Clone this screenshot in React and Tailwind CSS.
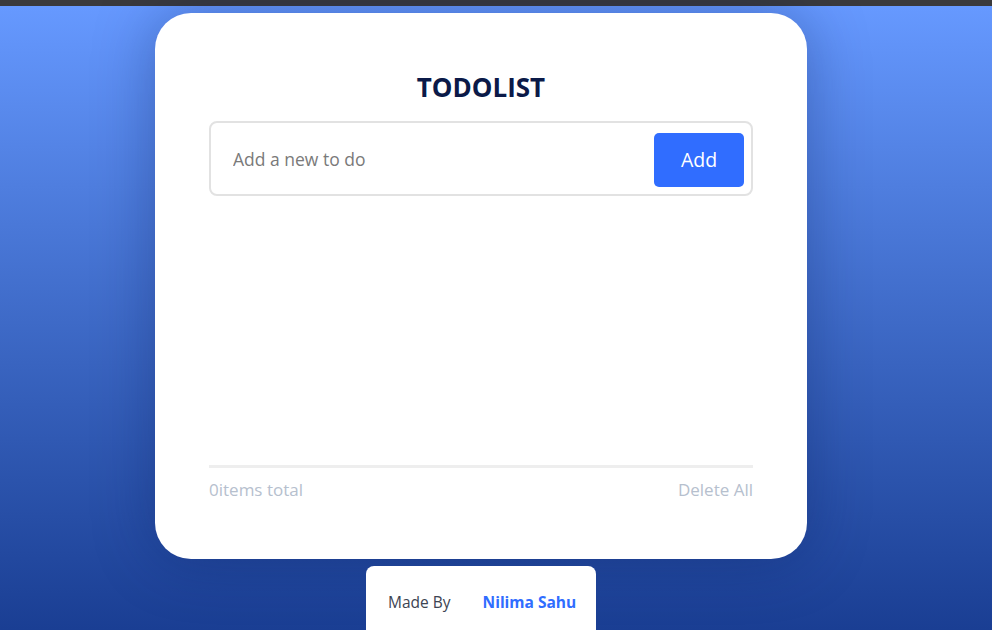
import React, { useState } from "react";

const App = () => {
  const [todo, setTodo] = useState("");
  const items = [];

  return (
    <div className="h-[630px] overflow-hidden font-['Open_Sans',sans-serif]">
      <div className="h-[6px] bg-[#3a3a3c]" />
      <div className="h-[624px] bg-gradient-to-b from-[#6699ff] to-[#1a3e93] flex justify-start">
        <div className="w-[962px] flex flex-col items-center">
          <div className="mt-[7px] w-[652px] h-[546px] shrink-0 bg-white rounded-[36px] px-[54px] flex flex-col shadow-[0_0_60px_rgba(10,30,90,0.35)]">
            <h1 className="pt-[57px] h-[91px] text-center text-[26px] leading-[34px] font-bold text-[#0b1a48]">
              TODOLIST
            </h1>
            <div className="mt-[17px] h-[75px] border-2 border-[#e2e2e2] rounded-[8px] flex items-center pl-[22px] pr-[7px]">
              <input
                value={todo}
                onChange={(e) => setTodo(e.target.value)}
                placeholder="Add a new to do"
                className="flex-1 mt-[2px] outline-none text-[17.5px] text-[#333] placeholder:text-[#7a7a7a]"
              />
              <button className="w-[90px] h-[54px] mt-[2px] bg-[#306dff] text-white text-[19.5px] rounded-[5px]">
                Add
              </button>
            </div>
            <div className="flex-1">
              {items.map((item) => (
                <div key={item}>{item}</div>
              ))}
            </div>
            <div className="h-[3px] bg-[#eeeeee]" />
            <div className="mt-[10px] mb-[57px] flex justify-between text-[17px] leading-[24px] text-[#b6c0ce]">
              <span>{items.length}items total</span>
              <button>Delete All</button>
            </div>
          </div>
          <div className="mt-[7px] w-[230px] h-[80px] shrink-0 bg-white rounded-[8px] flex pl-[22px] pt-[26px] text-[15.5px] leading-[20px]">
            <span className="text-[#3d4452]">Made By</span>
            <span className="ml-[32px] font-bold text-[#306dff]">Nilima Sahu</span>
          </div>
        </div>
      </div>
    </div>
  );
};

export default App;
